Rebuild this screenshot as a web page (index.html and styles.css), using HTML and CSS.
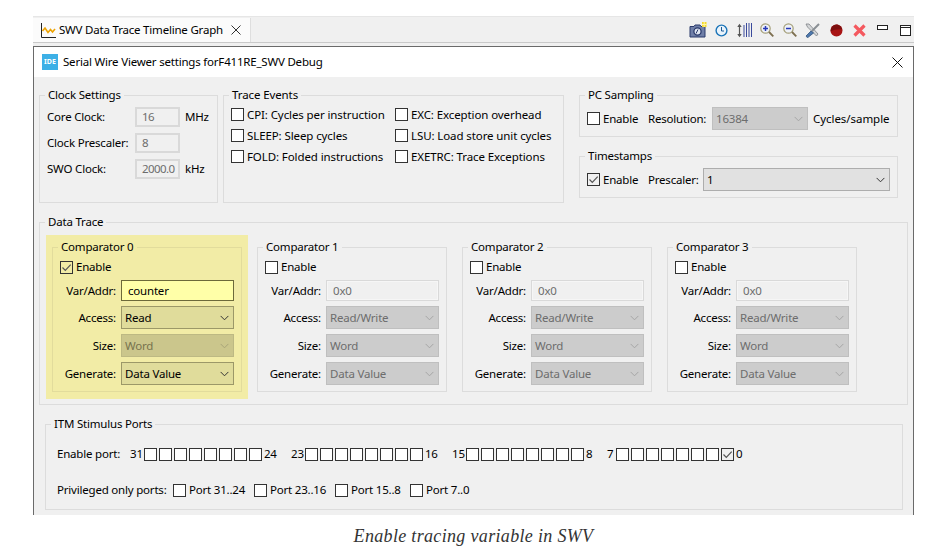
FILE: index.html
```html
<!DOCTYPE html>
<html lang="en">
<head>
<meta charset="utf-8">
<title>Enable tracing variable in SWV</title>
<link rel="stylesheet" href="styles.css">
</head>
<body>
<svg class="defs" width="0" height="0" aria-hidden="true">
  <symbol id="chev" viewBox="0 0 10 6"><path d="M.7.7 5 5 9.3.7" fill="none" stroke="currentColor" stroke-width="1.1"/></symbol>
  <symbol id="tick" viewBox="0 0 13 13"><path d="M2.5 6.5 5.3 9.3 10.7 3.6" fill="none" stroke="#555" stroke-width="1.2"/></symbol>
</svg>
<figure class="figure">
  <div class="shot">
    <div class="tabbar">
      <div class="tab">
        <svg class="tab-icon" width="15" height="15" viewBox="0 0 15 15"><path d="M.5 0V14.5H15" fill="none" stroke="#222"/><path d="M1.5 8 4 5 7 9.5 9.5 6.5 11.5 9 14 6" fill="none" stroke="#eda200" stroke-width="1.6"/></svg>
        <span>SWV Data Trace Timeline Graph</span>
        <svg class="tab-close" width="10" height="10" viewBox="0 0 10 10"><path d="M.5.5 9.5 9.5M9.5.5.5 9.5" stroke="#333"/></svg>
      </div>
      <div class="tools">
        <svg width="18" height="16" viewBox="0 0 18 16"><path d="M1 4.5H5L6 3H11L12 4.5H16V15H1Z" fill="#6f7fa8" stroke="#2b3a6b"/><circle cx="8.5" cy="9.5" r="3.6" fill="#dfe6f2" stroke="#2b3a6b" stroke-width="1.3"/><path d="M7 11.5 9 7.5" stroke="#2b3a6b"/><rect x="13" y="0" width="4.5" height="5" fill="#f6d92d"/><path d="M15.2 0V5M13 2.5H17.5" stroke="#fff6a8"/></svg>
        <svg width="13" height="13" viewBox="0 0 13 13"><circle cx="6.5" cy="6.5" r="5.4" fill="#e9f3fb" stroke="#1b74b8" stroke-width="1.4"/><path d="M6.5 3V7H9" fill="none" stroke="#1b5a96"/></svg>
        <svg class="mg1" width="15" height="15" viewBox="0 0 15 15"><path d="M2.5 2V13" stroke="#555" stroke-width="1.2"/><path d="M.3 4 2.5.8 4.7 4ZM.3 11 2.5 14.2 4.7 11Z" fill="#555"/><path d="M7 2V14M9.5 0V14M12 0V14M14.5 0V14" stroke="#3a4a9c"/></svg>
        <svg width="14" height="14" viewBox="0 0 14 14"><circle cx="5.5" cy="5.5" r="4.7" fill="#eef1f8" stroke="#a5a07a" stroke-width="1.2"/><path d="M3 5.5H8M5.5 3V8" stroke="#2638b8" stroke-width="1.5"/><path d="M9 9 13.3 13.3" stroke="#7d6f50" stroke-width="1.8"/></svg>
        <svg class="mg1" width="14" height="14" viewBox="0 0 14 14"><circle cx="5.5" cy="5.5" r="4.7" fill="#eef1f8" stroke="#a5a07a" stroke-width="1.2"/><path d="M3 5.5H8" stroke="#2638b8" stroke-width="1.5"/><path d="M9 9 13.3 13.3" stroke="#7d6f50" stroke-width="1.8"/></svg>
        <svg width="15" height="15" viewBox="0 0 15 15"><path d="M1 1 4 1 13 11 11.5 13 2.5 4Z" fill="#d4d6d8" stroke="#7d8287" stroke-width=".8"/><path d="M14 1 7 8" stroke="#8a8f94" stroke-width="2"/><path d="M6 8 1 13 2.5 14.8 8.5 10Z" fill="#4e78ad" stroke="#33547f" stroke-width=".8"/></svg>
        <svg class="mg2" width="13" height="13" viewBox="0 0 13 13"><circle cx="6.5" cy="6.5" r="6" fill="#a81414"/><path d="M.7 7.5C4 5.5 9 5 12.4 5.6 11.8 3 9.5.5 6.5.5 3 .5.5 3.5.7 7.5Z" fill="#7d0f0f"/></svg>
        <svg class="mg2" width="13" height="13" viewBox="0 0 13 13"><path d="M1.5 1.5 11.5 11.5M11.5 1.5 1.5 11.5" stroke="#f4595f" stroke-width="3.2"/></svg>
        <svg class="mg3 t-min" width="11" height="5" viewBox="0 0 11 5"><rect x=".5" y=".5" width="10" height="4" fill="#fff" stroke="#222"/></svg>
        <svg class="mg4" width="11" height="11" viewBox="0 0 11 11"><rect x=".5" y=".5" width="10" height="10" fill="#fff" stroke="#222"/><path d="M0 2.5H11" stroke="#222"/></svg>
      </div>
    </div>
    <div class="dialog">
      <div class="titlebar">
        <span class="ide">IDE</span>
        <span class="title">Serial Wire Viewer settings forF411RE_SWV Debug</span>
        <svg class="close" width="11" height="11" viewBox="0 0 11 11"><path d="M.5.5 10.5 10.5M10.5.5.5 10.5" stroke="#111"/></svg>
      </div>
      <div class="content">
        <div class="top-row">
          <fieldset class="group clock">
            <legend>Clock Settings</legend>
            <div class="clock-grid">
              <span>Core Clock:</span><span class="ro">16</span><span>MHz</span>
              <span>Clock Prescaler:</span><span class="ro">8</span><span></span>
              <span>SWO Clock:</span><span class="ro">2000.0</span><span>kHz</span>
            </div>
          </fieldset>
          <fieldset class="group events">
            <legend>Trace Events</legend>
            <div class="events-grid">
              <label class="check"><i class="cb"></i>CPI: Cycles per instruction</label>
              <label class="check"><i class="cb"></i>EXC: Exception overhead</label>
              <label class="check"><i class="cb"></i>SLEEP: Sleep cycles</label>
              <label class="check"><i class="cb"></i>LSU: Load store unit cycles</label>
              <label class="check"><i class="cb"></i>FOLD: Folded instructions</label>
              <label class="check"><i class="cb"></i>EXETRC: Trace Exceptions</label>
            </div>
          </fieldset>
          <div class="right-col">
            <fieldset class="group pc">
              <legend>PC Sampling</legend>
              <div class="inline-row">
                <label class="check enable"><i class="cb"></i>Enable</label>
                <span class="lbl">Resolution:</span>
                <div class="select off res">16384<svg class="chev"><use href="#chev"/></svg></div>
                <span class="unit">Cycles/sample</span>
              </div>
            </fieldset>
            <fieldset class="group ts">
              <legend>Timestamps</legend>
              <div class="inline-row">
                <label class="check enable"><i class="cb on"><svg width="13" height="13"><use href="#tick"/></svg></i>Enable</label>
                <span class="lbl">Prescaler:</span>
                <div class="select pres">1<svg class="chev"><use href="#chev"/></svg></div>
              </div>
            </fieldset>
          </div>
        </div>

        <fieldset class="group data">
          <legend>Data Trace</legend>
          <div class="comparators">
            <div class="cmp-wrap hot">
              <fieldset class="group cmp">
                <legend>Comparator 0</legend>
                <label class="check cmp-en"><i class="cb on"><svg width="13" height="13"><use href="#tick"/></svg></i>Enable</label>
                <div class="cmp-grid">
                  <span>Var/Addr:</span><div class="input live">counter</div>
                  <span>Access:</span><div class="select">Read<svg class="chev"><use href="#chev"/></svg></div>
                  <span>Size:</span><div class="select off">Word<svg class="chev"><use href="#chev"/></svg></div>
                  <span>Generate:</span><div class="select">Data Value<svg class="chev"><use href="#chev"/></svg></div>
                </div>
              </fieldset>
            </div>
            <div class="cmp-wrap">
              <fieldset class="group cmp">
                <legend>Comparator 1</legend>
                <label class="check cmp-en"><i class="cb"></i>Enable</label>
                <div class="cmp-grid">
                  <span>Var/Addr:</span><div class="input">0x0</div>
                  <span>Access:</span><div class="select off">Read/Write<svg class="chev"><use href="#chev"/></svg></div>
                  <span>Size:</span><div class="select off">Word<svg class="chev"><use href="#chev"/></svg></div>
                  <span>Generate:</span><div class="select off">Data Value<svg class="chev"><use href="#chev"/></svg></div>
                </div>
              </fieldset>
            </div>
            <div class="cmp-wrap">
              <fieldset class="group cmp">
                <legend>Comparator 2</legend>
                <label class="check cmp-en"><i class="cb"></i>Enable</label>
                <div class="cmp-grid">
                  <span>Var/Addr:</span><div class="input">0x0</div>
                  <span>Access:</span><div class="select off">Read/Write<svg class="chev"><use href="#chev"/></svg></div>
                  <span>Size:</span><div class="select off">Word<svg class="chev"><use href="#chev"/></svg></div>
                  <span>Generate:</span><div class="select off">Data Value<svg class="chev"><use href="#chev"/></svg></div>
                </div>
              </fieldset>
            </div>
            <div class="cmp-wrap">
              <fieldset class="group cmp">
                <legend>Comparator 3</legend>
                <label class="check cmp-en"><i class="cb"></i>Enable</label>
                <div class="cmp-grid">
                  <span>Var/Addr:</span><div class="input">0x0</div>
                  <span>Access:</span><div class="select off">Read/Write<svg class="chev"><use href="#chev"/></svg></div>
                  <span>Size:</span><div class="select off">Word<svg class="chev"><use href="#chev"/></svg></div>
                  <span>Generate:</span><div class="select off">Data Value<svg class="chev"><use href="#chev"/></svg></div>
                </div>
              </fieldset>
            </div>
          </div>
        </fieldset>

        <fieldset class="group itm">
          <legend>ITM Stimulus Ports</legend>
          <div class="ports">
            <span class="ports-lbl">Enable port:</span>
            <div class="port-bank b1"><span class="lead">31</span><div class="boxes"><i class="cb"></i><i class="cb"></i><i class="cb"></i><i class="cb"></i><i class="cb"></i><i class="cb"></i><i class="cb"></i><i class="cb"></i></div><span>24</span></div>
            <div class="port-bank b2"><span class="lead">23</span><div class="boxes"><i class="cb"></i><i class="cb"></i><i class="cb"></i><i class="cb"></i><i class="cb"></i><i class="cb"></i><i class="cb"></i><i class="cb"></i></div><span>16</span></div>
            <div class="port-bank b3"><span class="lead">15</span><div class="boxes"><i class="cb"></i><i class="cb"></i><i class="cb"></i><i class="cb"></i><i class="cb"></i><i class="cb"></i><i class="cb"></i><i class="cb"></i></div><span>8</span></div>
            <div class="port-bank b4"><span class="lead">7</span><div class="boxes"><i class="cb"></i><i class="cb"></i><i class="cb"></i><i class="cb"></i><i class="cb"></i><i class="cb"></i><i class="cb"></i><i class="cb on"><svg width="13" height="13"><use href="#tick"/></svg></i></div><span>0</span></div>
          </div>
          <div class="priv">
            <span class="priv-lbl">Privileged only ports:</span>
            <label class="check p1"><i class="cb"></i>Port 31..24</label>
            <label class="check p2"><i class="cb"></i>Port 23..16</label>
            <label class="check p3"><i class="cb"></i>Port 15..8</label>
            <label class="check p4"><i class="cb"></i>Port 7..0</label>
          </div>
        </fieldset>
      </div>
    </div>
  </div>
  <figcaption class="caption">Enable tracing variable in SWV</figcaption>
</figure>
</body>
</html>
```

FILE: styles.css
```css
* { box-sizing: border-box; }
html, body { margin: 0; padding: 0; background: #fff; overflow: hidden; }
body { width: 931px; height: 559px; font: 11.5px/16px "Noto Sans", sans-serif; letter-spacing: -0.2px; color: #000; white-space: nowrap; }
.defs { position: absolute; }
.figure { margin: 16px 0 0 33px; width: 881px; }

.shot { height: 499px; background: #f0f0f0; border-top: 1px solid #e6e6e6; display: flex; flex-direction: column; }
.tabbar { height: 26px; flex: none; display: flex; justify-content: space-between; border-bottom: 1px solid #c9c9c9; background: #f0f0f0; }
.tab { width: 217px; height: 24px; margin-top: 1px; background: #fbfbfb; display: flex; align-items: center; padding-left: 8px; box-shadow: 1px 0 0 #dedede; }
.tab-icon { margin-right: 3px; flex: none; }
.tab-close { margin-left: 8px; flex: none; }
.tools { display: flex; align-items: center; gap: 8px; height: 25px; padding: 1px 3px 0 0; }
.tools svg { display: block; flex: none; }
.mg1 { margin-left: 1px; }
.mg2 { margin-left: 2px; }
.mg3 { margin-left: 3px; }
.mg4 { margin-left: 4px; }
.t-min { margin-bottom: 6px; }

.dialog { flex: 1; margin-top: 3px; border: 1px solid #6a6a6a; border-bottom: 0; background: #f0f0f0; display: flex; flex-direction: column; min-height: 0; }
.titlebar { height: 30px; flex: none; background: #fff; display: flex; align-items: center; padding: 0 10px 0 8px; }
.ide { width: 16px; height: 16px; background: #3db0e6; color: #fff; font: 700 7px/16px "Noto Sans", sans-serif; letter-spacing: 0; text-align: center; flex: none; }
.title { margin-left: 5px; flex: 1; }
.close { flex: none; }

.content { flex: 1; padding: 10px 0 0 5px; display: flex; flex-direction: column; gap: 11px; }
.group { margin: 0; padding: 0; min-width: 0; border: 1px solid #dcdcdc; }
.group > legend { margin-left: 5px; padding: 0 3px; line-height: 16px; }

.top-row { display: flex; align-items: flex-start; }
.clock { width: 179px; height: 116px; margin-right: 5px; }
.events { width: 341px; height: 116px; margin-right: 15px; letter-spacing: -0.1px; }
.right-col { width: 319px; display: flex; flex-direction: column; gap: 11px; }
.pc, .ts { height: 50px; }

.clock-grid { display: grid; grid-template-columns: 88px 45px auto; grid-auto-rows: 20px; row-gap: 6px; align-items: center; padding: 4px 0 0 7px; }
.ro { height: 20px; border: 2px solid #d9d9d9; background: #f0f0f0; color: #6d6d6d; padding-left: 5px; line-height: 16px; letter-spacing: -0.6px; }
.clock-grid > span:nth-child(3n) { padding-left: 5px; }

.events-grid { display: grid; grid-template-columns: 164px auto; grid-auto-rows: 21px; align-items: center; padding: 1px 0 0 7px; }
.check { display: flex; align-items: center; }
.cb { display: block; flex: none; width: 13px; height: 13px; border: 1px solid #333; background: #fff; margin-right: 3px; }
.cb.on { background: transparent; }
.cb.on svg { display: block; margin: -1px 0 0 -1px; }

.inline-row { display: flex; align-items: center; padding: 4px 0 0 7px; }
.enable { width: 61px; }
.lbl { flex: none; }
.pc .lbl { width: 64px; }
.ts .lbl { width: 55px; }
.select { height: 23px; border: 1px solid #adadad; background: #e1e1e1; padding: 0 4px 0 3px; display: flex; align-items: center; justify-content: space-between; color: #000; }
.select .chev { width: 9px; height: 6px; color: #333; flex: none; }
.select.off { background: #ccc; border-color: #bfbfbf; color: #6d6d6d; }
.select.off .chev { color: #a5a5a5; }
.res { width: 96px; }
.pres { width: 187px; }
.unit { margin-left: 5px; letter-spacing: -0.05px; }

.data { width: 869px; height: 191px; }
.comparators { display: flex; gap: 3px; padding: 5px 0 0 6px; }
.cmp-wrap { width: 202px; height: 164px; padding: 4px 6px 0; }
.cmp-wrap.hot { background: #f2eca6; }
.cmp { height: 153px; }
.hot .cmp { border-color: #e2dc9c; }
.cmp-en { height: 18px; margin: 3px 0 0 7px; }
.cmp-grid { display: grid; grid-template-columns: 63px 113px; column-gap: 5px; row-gap: 5px; align-items: center; grid-template-rows: 21px 23px 23px 23px; margin-top: 4px; }
.cmp-grid > span { text-align: right; }
.input { height: 21px; border: 1px solid #d9d9d9; background: #f0f0f0; color: #6d6d6d; padding-left: 6px; line-height: 19px; box-shadow: inset 0 0 0 1px #f6f6f6; }
.input.live { background: #ffffa8; border-color: #6d6a3a; color: #000; box-shadow: none; }
.hot .select { background: #e0dc9b; border-color: #9c9868; }
.hot .select.off { background: #cbc68c; border-color: #bdb983; color: #77734e; }
.hot .select.off .chev { color: #a8a478; }

.itm { width: 858px; height: 94px; margin-left: 6px; }
.ports { display: flex; align-items: center; height: 18px; margin: 13px 0 0 11px; }
.ports-lbl { width: 73px; flex: none; }
.port-bank { display: flex; align-items: center; flex: none; }
.lead { width: 14px; flex: none; }
.b1, .b2 { width: 161px; }
.b3 { width: 155px; }
.b4 .lead { width: 9px; }
.boxes { display: flex; gap: 2.05px; margin-right: 1.6px; }
.boxes .cb { margin: 0; }
.priv { display: flex; align-items: center; height: 18px; margin: 18px 0 0 11px; }
.priv-lbl { width: 116px; flex: none; }
.p1, .p2 { width: 81px; flex: none; }
.p3 { width: 75px; flex: none; }
.p4 { flex: none; }

.caption { margin-top: 11px; font: italic 18px/20px "Liberation Serif", serif; letter-spacing: 0.33px; color: #333; text-align: center; }
```
